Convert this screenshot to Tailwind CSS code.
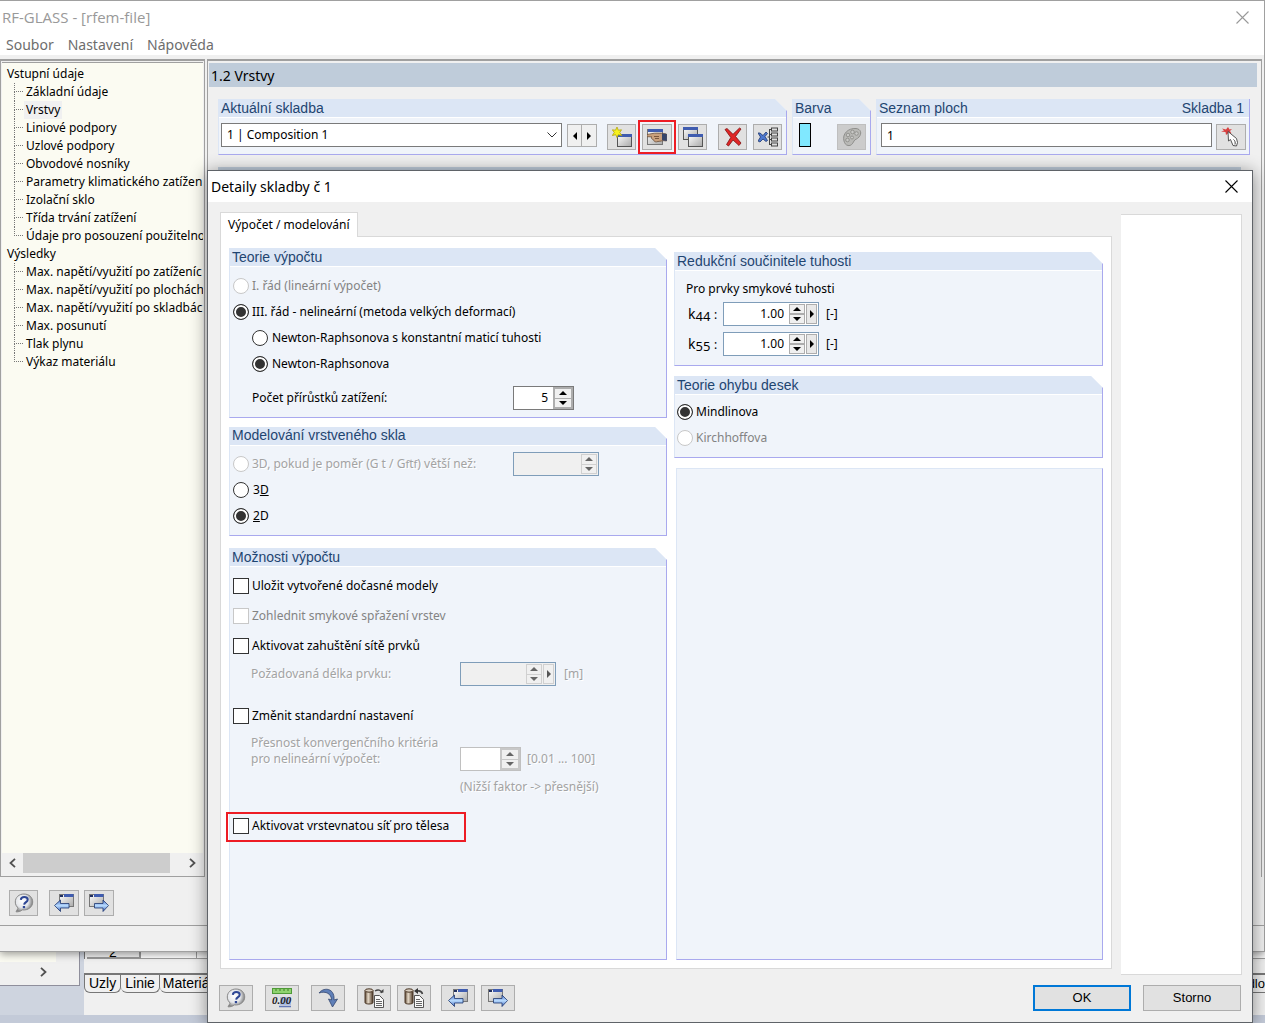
<!DOCTYPE html>
<html lang="cs">
<head>
<meta charset="utf-8">
<title>RF-GLASS - [rfem-file]</title>
<script src="https://cdn.jsdelivr.net/npm/@tailwindcss/browser@4"></script>
</head>
<body class="h-screen overflow-hidden bg-[#ced4df] font-['Noto_Sans',sans-serif] text-[12px] leading-4 text-black">

<svg class="absolute h-0 w-0" aria-hidden="true">
  <defs>
    <linearGradient id="win" x1="0" y1="0" x2="1" y2="1"><stop offset="0" stop-color="#fff"/><stop offset="1" stop-color="#a9a9a9"/></linearGradient>
    <linearGradient id="arr" x1="0" y1="0" x2="0" y2="1"><stop offset="0" stop-color="#4f75cc"/><stop offset=".5" stop-color="#b9dcff"/><stop offset="1" stop-color="#3b60b8"/></linearGradient>
    <linearGradient id="cyl" x1="0" y1="0" x2="1" y2="0"><stop offset="0" stop-color="#5a4632"/><stop offset=".4" stop-color="#e8dccb"/><stop offset="1" stop-color="#4a3726"/></linearGradient>
    <radialGradient id="bub" cx=".4" cy=".4" r=".6"><stop offset="0" stop-color="#fff"/><stop offset=".6" stop-color="#e4e6ea"/><stop offset="1" stop-color="#808080"/></radialGradient>
  </defs>
  <symbol id="i-help" viewBox="0 0 20 20"><path d="M10 1C5 1 1.300 4.300 1.300 9c0 2.600 1.200 4.700 2.900 6L2 18.800c2.500.2 4.600-.5 6.200-1.900C14 17.600 18.700 14 18.700 9c0-4.700-3.700-8-8.700-8z" fill="url(#bub)" stroke="#8a8a8a"/><path d="M6.800 6.800C7 4.900 8.500 4 10.300 4c2 0 3.400 1 3.400 2.700 0 2.300-3.200 2.500-3.600 5" fill="none" stroke="#2d4694" stroke-width="2"/><rect x="8.800" y="13" width="2.300" height="2.200" fill="#2d4694"/></symbol>
  <symbol id="i-prev" viewBox="0 0 20 20"><rect x="5.500" y="1.500" width="14" height="12" fill="url(#win)" stroke="#777"/><rect x="10" y="1" width="9.500" height="3" fill="#3f5cb0"/><rect x="6" y="2" width="3" height="2" fill="#22305f"/><path d="M.5 12.500 6.500 7v3.500H15v4.500H6.500v3.500z" fill="url(#arr)" stroke="#20376f" stroke-width=".8"/></symbol>
  <symbol id="i-next" viewBox="0 0 20 20"><rect x=".5" y="1.500" width="14" height="12" fill="url(#win)" stroke="#777"/><rect x="5" y="1" width="9.500" height="3" fill="#3f5cb0"/><rect x="1" y="2" width="3" height="2" fill="#22305f"/><path d="M19.500 12.500 14 7v3.500H5.500v4.500H14v3.500z" fill="url(#arr)" stroke="#20376f" stroke-width=".8"/></symbol>
  <symbol id="i-new" viewBox="0 0 20 20"><rect x="5.500" y="7.500" width="14" height="12" fill="url(#win)" stroke="#555"/><rect x="5" y="7" width="15" height="3" fill="#3f5cb0"/><path d="M5 0 6.300 3.200 9.500 2.800 7.800 5.500 9.800 8.500 6.300 7.700 5 10.500 3.700 7.700.3 8.500l2-3L.3 2.800l3.200.4z" fill="#f7f21d" stroke="#b3a511" stroke-width=".8"/></symbol>
  <symbol id="i-edit" viewBox="0 0 20 20"><rect x=".5" y="2.500" width="15" height="15" fill="url(#win)" stroke="#777"/><rect x="1" y="2" width="15" height="3" fill="#3f5cb0"/><path d="M0 7.500c3-.5 7-1.500 10-1.300 3 .3 5-.2 9.500.8v7c-4-1-6 .5-8.500.5-2 .8-4 .2-4-1L5 11.800c-1-.3-.7-1.600 0-1.900L0 9.700z" fill="#c9a07c" stroke="#6b4f3b" stroke-width=".8"/><path d="M15 6.500 19.800 7v7l-4.800-.8z" fill="#36466b"/><path d="M7 9.500h5M8 11.500h4" stroke="#7a573e"/></symbol>
  <symbol id="i-copy" viewBox="0 0 20 20"><rect x=".5" y=".5" width="14" height="12" fill="url(#win)" stroke="#555"/><rect x="0" y="0" width="15" height="3" fill="#3f5cb0"/><rect x="5.500" y="7.500" width="14" height="12" fill="url(#win)" stroke="#555"/><rect x="5" y="7" width="15" height="3" fill="#3f5cb0"/></symbol>
  <symbol id="i-del" viewBox="0 0 20 20"><path d="M2 2.500 4 1.500l6 5.800 6.500-6.300 1.500 1-5.500 7.500 5.500 6.500-2 2.500-6-5.500-4.500 6-2-1.500 4.300-7z" fill="#e02626" stroke="#7d1212" stroke-width=".8"/></symbol>
  <symbol id="i-delall" viewBox="0 0 20 20"><path d="M0 6h2l3 2.500L8 5l1.500 1.500-2.500 3 2.500 4-1.500 1L5 12l-3 3-2-1 2.500-4z" fill="#4d78d0" stroke="#20376f" stroke-width=".8"/><path d="M9.500 10h2M11.500 2v16" stroke="#444"/><path d="M11.500 2.500h2M11.500 7.500h2M11.500 12.500h2M11.500 17.500h2" stroke="#444"/><g fill="#ddd" stroke="#444"><rect x="13.500" y="1" width="6" height="3"/><rect x="13.500" y="6" width="6" height="3"/><rect x="13.500" y="11" width="6" height="3"/><rect x="13.500" y="16" width="6" height="3"/></g></symbol>
  <symbol id="i-pal" viewBox="0 0 20 20"><path d="M2 14C0 7 6 1 14 1.500c5 .5 6 5 3 8.500-2 2.500-4 2-5 4-1.500 3-3 5-6 4.500C3.500 18 2.500 16 2 14z" fill="#b9b9b6" stroke="#8e8e8b"/><g fill="#c9c9c7" stroke="#93938f"><circle cx="6" cy="8" r="1.800"/><circle cx="10.500" cy="5" r="1.800"/><circle cx="14.500" cy="6.500" r="1.800"/><circle cx="5.500" cy="13" r="1.800"/><circle cx="10" cy="10.500" r="1.500"/></g></symbol>
  <symbol id="i-pick" viewBox="0 0 20 20"><path d="M1 1.500l4 1L7 0l1.500 2.500L11 2 9 4l1.500 2.500-3-.5L5 8l-.5-3L0 4.500 3 3.500z" fill="#d84040"/><path d="M7 4.500 7.500 14l2-1.500 2.500 6 3.500.5 1-3.500-1-4z" fill="#fff" stroke="#444" stroke-width=".9"/><path d="M12.500 12.500c1.500 1 2 3 1.500 5" fill="none" stroke="#444"/></symbol>
  <symbol id="i-undo" viewBox="0 0 20 20"><path d="M1 5C5-.5 15-.5 16 9v3l3.500-1-5 8-4-8 3 1C13.500 6 8 2.500 1 5z" fill="#5f7fb8" stroke="#34466f" stroke-width=".8"/></symbol>
  <symbol id="i-load" viewBox="0 0 20 20"><path d="M1 2.500v12c0 2 8 2 8 0v-12" fill="url(#cyl)" stroke="#4a3726"/><ellipse cx="5" cy="2.500" rx="4" ry="1.700" fill="#d8cdbf" stroke="#4a3726"/><path d="M11 3c3-2 6-1 7 2" fill="none" stroke="#444" stroke-width="1.500"/><path d="M15.500 4.500h4V1z" fill="#444"/><path d="M10.500 7.500h5l4 4v8h-9z" fill="#fafafa" stroke="#555"/><path d="M12 11.500h4M12 13.500h6M12 15.500h6M12 17.500h6" stroke="#666"/></symbol>
  <symbol id="i-save" viewBox="0 0 20 20"><path d="M1 2.500v12c0 2 8 2 8 0v-12" fill="url(#cyl)" stroke="#4a3726"/><ellipse cx="5" cy="2.500" rx="4" ry="1.700" fill="#d8cdbf" stroke="#4a3726"/><path d="M13 3c3-.5 5 1 5.500 3" fill="none" stroke="#444" stroke-width="1.500"/><path d="M14 0v6l-4-3z" fill="#333"/><path d="M10.500 7.500h5l4 4v8h-9z" fill="#fafafa" stroke="#555"/><path d="M12 11.500h4M12 13.500h6M12 15.500h6M12 17.500h6" stroke="#666"/></symbol>
  <symbol id="i-x" viewBox="0 0 13 13"><path d="M.5.500l12 12M12.500.500l-12 12" fill="none" stroke="currentColor" stroke-width="1.100"/></symbol>
  <symbol id="i-up" viewBox="0 0 8 4"><path d="M4 0l4 4H0z" fill="currentColor"/></symbol>
  <symbol id="i-down" viewBox="0 0 8 4"><path d="M0 0h8L4 4z" fill="currentColor"/></symbol>
  <symbol id="i-left" viewBox="0 0 4 8"><path d="M4 0v8L0 4z" fill="currentColor"/></symbol>
  <symbol id="i-right" viewBox="0 0 4 8"><path d="M0 0l4 4-4 4z" fill="currentColor"/></symbol>
  <symbol id="i-chl" viewBox="0 0 7 10"><path d="M6 .8 1.500 5 6 9.200" fill="none" stroke="currentColor" stroke-width="1.800"/></symbol>
  <symbol id="i-chr" viewBox="0 0 7 10"><path d="M1 .8 5.500 5 1 9.200" fill="none" stroke="currentColor" stroke-width="1.800"/></symbol>
</svg>

<div class="relative flex h-full flex-col">

  <!-- Main window -->
  <div class="z-10 flex min-h-0 flex-1 flex-col border-t border-r border-b border-[#a0a0a0] bg-[#f0f0f0] shadow-[0_2px_8px_rgba(0,0,0,0.4)]">
    <header class="flex h-8 items-center justify-between bg-white pl-0.5 pr-[15px] font-['Open_Sans',sans-serif] text-[15px] text-[#999]">
      <h1>RF-GLASS - [rfem-file]</h1>
      <button aria-label="Zavřít" class="text-[#999]"><svg class="h-[13px] w-[13px]"><use href="#i-x"/></svg></button>
    </header>
    <nav class="flex h-[22px] items-center gap-3.5 bg-white pt-px pl-1.5 text-[14px] text-[#6d6d6d]">
      <a href="#">Soubor</a><a href="#">Nastavení</a><a href="#">Nápověda</a>
    </nav>

    <div class="flex min-h-0 flex-1 gap-0.5 pt-1">
      <!-- Navigator -->
      <aside class="flex w-[205px] shrink-0 flex-col">
        <div class="flex min-h-0 flex-1 flex-col border-t-2 border-r border-b border-l border-[#a0a0a0] p-px">
          <div class="min-h-0 flex-1 overflow-hidden whitespace-nowrap border-t border-[#a0a0a0] bg-[#fbfbf2] pt-0.5 pl-[5px] leading-[18px]">
            <div class="h-[18px]">Vstupní údaje</div>
            <ul class="pl-[7px] [&_i]:h-[9px] [&_i]:border-l [&_i]:border-dotted [&_i]:border-[#777] [&_i:first-child]:border-b [&>li]:flex [&>li]:h-[18px]">
              <li><span class="mr-[3px] flex w-[9px] shrink-0 flex-col"><i></i><i></i></span>Základní údaje</li>
              <li><span class="mr-px flex w-[9px] shrink-0 flex-col"><i></i><i></i></span><span class="bg-[#f0f0f0] px-0.5">Vrstvy</span></li>
              <li><span class="mr-[3px] flex w-[9px] shrink-0 flex-col"><i></i><i></i></span>Liniové podpory</li>
              <li><span class="mr-[3px] flex w-[9px] shrink-0 flex-col"><i></i><i></i></span>Uzlové podpory</li>
              <li><span class="mr-[3px] flex w-[9px] shrink-0 flex-col"><i></i><i></i></span>Obvodové nosníky</li>
              <li><span class="mr-[3px] flex w-[9px] shrink-0 flex-col"><i></i><i></i></span>Parametry klimatického zatížen</li>
              <li><span class="mr-[3px] flex w-[9px] shrink-0 flex-col"><i></i><i></i></span>Izolační sklo</li>
              <li><span class="mr-[3px] flex w-[9px] shrink-0 flex-col"><i></i><i></i></span>Třída trvání zatížení</li>
              <li><span class="mr-[3px] flex w-[9px] shrink-0 flex-col"><i></i></span>Údaje pro posouzení použitelno</li>
            </ul>
            <div class="h-[18px]">Výsledky</div>
            <ul class="pl-[7px] [&_i]:h-[9px] [&_i]:border-l [&_i]:border-dotted [&_i]:border-[#777] [&_i:first-child]:border-b [&>li]:flex [&>li]:h-[18px]">
              <li><span class="mr-[3px] flex w-[9px] shrink-0 flex-col"><i></i><i></i></span>Max. napětí/využití po zatíženíc</li>
              <li><span class="mr-[3px] flex w-[9px] shrink-0 flex-col"><i></i><i></i></span>Max. napětí/využití po plochách</li>
              <li><span class="mr-[3px] flex w-[9px] shrink-0 flex-col"><i></i><i></i></span>Max. napětí/využití po skladbác</li>
              <li><span class="mr-[3px] flex w-[9px] shrink-0 flex-col"><i></i><i></i></span>Max. posunutí</li>
              <li><span class="mr-[3px] flex w-[9px] shrink-0 flex-col"><i></i><i></i></span>Tlak plynu</li>
              <li><span class="mr-[3px] flex w-[9px] shrink-0 flex-col"><i></i></span>Výkaz materiálu</li>
            </ul>
          </div>
          <div class="mb-0.5 flex h-5 items-center text-[#505050]">
            <button aria-label="Doleva" class="flex w-[21px] justify-center"><svg class="h-[10px] w-[7px]"><use href="#i-chl"/></svg></button>
            <div class="h-full w-[147px] bg-[#cdcdcd]"></div>
            <button aria-label="Doprava" class="ml-auto flex w-[21px] justify-center"><svg class="h-[10px] w-[7px]"><use href="#i-chr"/></svg></button>
          </div>
        </div>
      </aside>

      <!-- Work area -->
      <main class="mr-0.5 min-w-0 flex-1 border-t-2 border-r border-l border-[#a0a0a0] pt-0.5 pr-1 pl-px">
        <h2 class="flex h-6 items-center bg-[#bfccda] pt-px pl-0.5 text-[14px]">1.2 Vrstvy</h2>
        <div class="mt-3 flex h-14 gap-[5px] pr-[7px] pl-[9px]">
          <section class="flex min-w-0 flex-1 flex-col border-r border-b border-l border-[#a9a9ee] border-l-[#dce6f5] bg-[#f0f4fa] [clip-path:polygon(0_0,calc(100%-12px)_0,100%_12px,100%_100%,0_100%)]">
            <h3 class="h-[19px] border-b border-white bg-[#dce6f5] pl-0.5 font-['Liberation_Sans',Arial,sans-serif] text-[14px] leading-[18px] text-[#1f4571]">Aktuální skladba</h3>
            <div class="flex flex-1 items-start pt-[5px] pr-1 pl-0.5">
              <div class="relative min-w-0 flex-1">
                <select aria-label="Aktuální skladba" class="h-6 w-full appearance-none border border-[#7a7a7a] bg-white pl-[5px]"><option>1 | Composition 1</option></select>
                <svg class="pointer-events-none absolute top-[9px] right-[5px] h-[6px] w-[10px]" viewBox="0 0 10 6"><path d="M.5.500 5 5 9.500.500" fill="none" stroke="#333"/></svg>
              </div>
              <div class="mt-px ml-[5px] flex">
                <button aria-label="Předchozí" class="flex h-[23px] w-[15px] items-center justify-center border border-[#adadad] bg-[#f0f0f0]"><svg class="h-2 w-1"><use href="#i-left"/></svg></button>
                <button aria-label="Další" class="flex h-[23px] w-[15px] items-center justify-center border border-l-0 border-[#adadad] bg-[#f0f0f0]"><svg class="h-2 w-1"><use href="#i-right"/></svg></button>
              </div>
              <div class="mt-px ml-[10px] flex gap-[6px]">
                <button aria-label="Nová" class="flex h-[26px] w-[29px] items-center justify-center border border-[#adadad] bg-[#e1e1e1]"><svg class="h-5 w-5"><use href="#i-new"/></svg></button>
                <button aria-label="Detaily" class="flex h-[26px] w-[30px] items-center justify-center border border-[#adadad] bg-[#e1e1e1] outline-2 outline-offset-2 outline-[#ed1c24]"><svg class="h-5 w-5"><use href="#i-edit"/></svg></button>
                <button aria-label="Kopírovat" class="flex h-[26px] w-[29px] items-center justify-center border border-[#adadad] bg-[#e1e1e1]"><svg class="h-5 w-5"><use href="#i-copy"/></svg></button>
              </div>
              <div class="mt-px ml-[11px] flex gap-[6px]">
                <button aria-label="Smazat" class="flex h-[26px] w-[29px] items-center justify-center border border-[#adadad] bg-[#e1e1e1]"><svg class="h-5 w-5"><use href="#i-del"/></svg></button>
                <button aria-label="Smazat vše" class="flex h-[26px] w-[29px] items-center justify-center border border-[#adadad] bg-[#e1e1e1]"><svg class="h-5 w-5"><use href="#i-delall"/></svg></button>
              </div>
            </div>
          </section>
          <section class="flex w-[79px] flex-col border-r border-b border-l border-[#a9a9ee] border-l-[#dce6f5] bg-[#f0f4fa] [clip-path:polygon(0_0,calc(100%-12px)_0,100%_12px,100%_100%,0_100%)]">
            <h3 class="h-[19px] border-b border-white bg-[#dce6f5] pl-0.5 font-['Liberation_Sans',Arial,sans-serif] text-[14px] leading-[18px] text-[#1f4571]">Barva</h3>
            <div class="flex justify-between pt-[5px] pr-1 pl-1.5">
              <div class="h-6 w-3 border border-black bg-[#80e8ff]"></div>
              <button aria-label="Barva" disabled class="mt-px flex h-[26px] w-[29px] items-center justify-center border border-[#bfbfbf] bg-[#ccc]"><svg class="h-5 w-5"><use href="#i-pal"/></svg></button>
            </div>
          </section>
          <section class="flex w-[374px] flex-col border-r border-b border-l border-[#a9a9ee] border-l-[#dce6f5] bg-[#f0f4fa]">
            <h3 class="flex h-[19px] justify-between border-b border-white bg-[#dce6f5] pr-[5px] pl-0.5 font-['Liberation_Sans',Arial,sans-serif] text-[14px] leading-[18px] text-[#1f4571]"><span>Seznam ploch</span><span>Skladba 1</span></h3>
            <div class="flex gap-1 pt-[5px] pr-[3px] pl-1">
              <input aria-label="Seznam ploch" value="1" class="h-6 min-w-0 flex-1 border border-[#7a7a7a] bg-white px-[5px]">
              <button aria-label="Vybrat plochy" class="mt-px flex h-[26px] w-[30px] items-center justify-center border border-[#adadad] bg-[#e1e1e1]"><svg class="h-5 w-5"><use href="#i-pick"/></svg></button>
            </div>
          </section>
        </div>
        <div class="mt-3 mr-4 ml-[9px] h-[18px] bg-[#bfccda]"></div>
      </main>
    </div>

    <div class="flex h-12 items-end pb-[9px] pl-[9px]">
      <button aria-label="Nápověda" class="flex h-[26px] w-[29px] items-center justify-center border border-[#adadad] bg-[#e1e1e1]"><svg class="h-5 w-5"><use href="#i-help"/></svg></button>
      <button aria-label="Zpět" class="ml-[11px] flex h-[26px] w-[30px] items-center justify-center border border-[#adadad] bg-[#e1e1e1]"><svg class="h-5 w-5"><use href="#i-prev"/></svg></button>
      <button aria-label="Vpřed" class="ml-[5px] flex h-[26px] w-[30px] items-center justify-center border border-[#adadad] bg-[#e1e1e1]"><svg class="h-5 w-5"><use href="#i-next"/></svg></button>
    </div>
    <div class="h-[26px] border-t border-[#a0a0a0]"></div>
  </div>

  <!-- Host application, visible below the main window -->
  <div class="flex h-[71px] overflow-hidden border-b-8 border-[#c3cad8]">
    <div class="flex h-[34px] w-20 shrink-0 flex-col border-r border-b border-[#8f8f9c] bg-[#f0f0f0]">
      <div class="h-[10px] w-14 bg-[#fbfbf2]"></div>
      <div class="flex h-5 items-center pl-10 text-[#505050]"><svg class="h-[10px] w-[7px]"><use href="#i-chr"/></svg></div>
    </div>
    <div class="ml-1 min-w-0 flex-1 overflow-hidden bg-[#f0f0f0] font-['Liberation_Sans',Arial,sans-serif] text-[14px]">
      <div class="flex h-[7px] overflow-hidden border-l border-[#777]"><div class="ml-0.5 flex w-[54px] items-end justify-center border-r-2 border-b-2 border-[#999] leading-[10px]">2</div><div class="w-14 border-r border-b border-[#a0a0a0] bg-white"></div><div class="flex-1 border-b border-[#a0a0a0] bg-white"></div></div>
      <div class="mt-[14px] flex border-t-2 border-[#777] leading-[17px]">
        <a href="#" class="rounded-b-md border-r border-b border-l border-[#777] px-1">Uzly</a>
        <a href="#" class="rounded-b-md border-r border-b border-[#777] px-1">Linie</a>
        <a href="#" class="rounded-b-md border-r border-b border-[#777] px-[3px]">Materiály</a>
        <span class="flex-1 border-b border-[#777] text-right text-[13px]"><a href="#">dlo</a></span>
      </div>
    </div>
  </div>

  <!-- Details dialog -->
  <div role="dialog" aria-labelledby="dlg-title" class="absolute top-[170px] right-3 bottom-0 left-[207px] z-20 flex flex-col border border-[#5f6368] bg-[#f0f0f0] shadow-[0_2px_16px_rgba(0,0,0,0.45)]">
    <header class="flex h-[31px] items-center justify-between bg-white pr-3.5 pl-[3px] text-[14px]">
      <h2 id="dlg-title">Detaily skladby č 1</h2>
      <button aria-label="Zavřít"><svg class="h-[13px] w-[13px]"><use href="#i-x"/></svg></button>
    </header>

    <div class="flex min-h-0 flex-1 gap-[9px] pr-2.5 pl-3">
      <div class="mt-[10px] mb-[6px] flex min-w-0 flex-1 flex-col">
        <div class="z-10 -mb-px flex"><button role="tab" class="h-[25px] border border-b-0 border-[#d9d9d9] bg-white px-[7px]">Výpočet / modelování</button></div>
        <div class="flex min-h-0 flex-1 gap-[7px] border border-[#d9d9d9] bg-white px-2 pt-[11px] pb-2">

          <div class="flex min-w-0 flex-[438_1_0%] flex-col">
            <fieldset class="h-[170px] border-r border-b border-l border-[#a9a9ee] border-l-[#dce6f5] bg-[#f0f4fa] [clip-path:polygon(0_0,calc(100%-12px)_0,100%_12px,100%_100%,0_100%)]">
              <h3 class="h-[19px] border-b border-white bg-[#dce6f5] pl-0.5 font-['Liberation_Sans',Arial,sans-serif] text-[14px] leading-[18px] text-[#1f4571]">Teorie výpočtu</h3>
              <div class="pt-1.5 pl-[3px]">
                <label class="flex h-[26px] items-center gap-[3px] text-[#838383]"><input type="radio" disabled name="theory" class="h-4 w-4 appearance-none rounded-full border border-[#c8c8c8] bg-white">I. řád (lineární výpočet)</label>
                <label class="flex h-[26px] items-center gap-[3px]"><input type="radio" checked name="theory" class="h-4 w-4 appearance-none rounded-full border border-[#333] bg-white checked:bg-[#333] checked:shadow-[inset_0_0_0_2px_#fff]">III. řád - nelineární (metoda velkých deformací)</label>
                <label class="flex h-[26px] items-center gap-1 pl-[19px]"><input type="radio" name="method" class="h-4 w-4 appearance-none rounded-full border border-[#333] bg-white">Newton-Raphsonova s konstantní maticí tuhosti</label>
                <label class="flex h-[26px] items-center gap-1 pl-[19px]"><input type="radio" checked name="method" class="h-4 w-4 appearance-none rounded-full border border-[#333] bg-white checked:bg-[#333] checked:shadow-[inset_0_0_0_2px_#fff]">Newton-Raphsonova</label>
                <div class="mt-[9px] flex h-6 items-center pl-[19px]">
                  <label for="incr" class="w-[261px]">Počet přírůstků zatížení:</label>
                  <div class="flex h-6 w-[61px] border border-[#7a7a7a] bg-white"><input id="incr" value="5" class="min-w-0 flex-1 pr-[5px] text-right"><div class="flex w-5 flex-col gap-px border-2 border-[#adadad] bg-[#adadad]"><button aria-label="Více" class="flex flex-1 items-center justify-center bg-[#f0f0f0]"><svg class="h-1 w-2"><use href="#i-up"/></svg></button><button aria-label="Méně" class="flex flex-1 items-center justify-center bg-[#f0f0f0]"><svg class="h-1 w-2"><use href="#i-down"/></svg></button></div></div>
                </div>
              </div>
            </fieldset>

            <fieldset class="mt-[9px] h-[109px] border-r border-b border-l border-[#a9a9ee] border-l-[#dce6f5] bg-[#f0f4fa] [clip-path:polygon(0_0,calc(100%-12px)_0,100%_12px,100%_100%,0_100%)]">
              <h3 class="h-[19px] border-b border-white bg-[#dce6f5] pl-0.5 font-['Liberation_Sans',Arial,sans-serif] text-[14px] leading-[17px] text-[#1f4571]">Modelování vrstveného skla</h3>
              <div class="pt-[5px] pl-[3px]">
                <div class="flex h-[26px] items-center">
                  <label class="flex w-[280px] items-center gap-[3px] whitespace-nowrap text-[#a3a3a3] [text-shadow:1px_1px_0_#fff]"><input type="radio" disabled name="model" class="h-4 w-4 appearance-none rounded-full border border-[#c8c8c8] bg-white"><span>3D, pokud je poměr (G t / G<span class="text-[11px]">f</span>t<span class="text-[11px]">f</span>) větší než:</span></label>
                  <div class="flex h-6 w-[86px] border border-[#7f9db9] bg-[#f0f0f0] p-px"><input aria-label="Poměr" disabled class="min-w-0 flex-1"><div class="flex w-4 flex-col bg-[#d0d0d0] p-px gap-px text-[#666]"><button disabled aria-label="Více" class="flex flex-1 items-center justify-center bg-[#f0f0f0]"><svg class="h-1 w-2"><use href="#i-up"/></svg></button><button disabled aria-label="Méně" class="flex flex-1 items-center justify-center bg-[#f0f0f0]"><svg class="h-1 w-2"><use href="#i-down"/></svg></button></div></div>
                </div>
                <label class="flex h-[26px] items-center gap-1"><input type="radio" name="model" class="h-4 w-4 appearance-none rounded-full border border-[#333] bg-white"><span>3<u>D</u></span></label>
                <label class="flex h-[26px] items-center gap-1"><input type="radio" checked name="model" class="h-4 w-4 appearance-none rounded-full border border-[#333] bg-white checked:bg-[#333] checked:shadow-[inset_0_0_0_2px_#fff]"><span><u>2</u>D</span></label>
              </div>
            </fieldset>

            <div class="relative mt-3 flex min-h-0 flex-1 flex-col">
              <fieldset class="flex-1 border-r border-b border-l border-[#a9a9ee] border-l-[#dce6f5] bg-[#f0f4fa] [clip-path:polygon(0_0,calc(100%-12px)_0,100%_12px,100%_100%,0_100%)]">
                <h3 class="h-[19px] border-b border-white bg-[#dce6f5] pl-0.5 font-['Liberation_Sans',Arial,sans-serif] text-[14px] leading-[18px] text-[#1f4571]">Možnosti výpočtu</h3>
                <div class="pt-1 pl-[3px]">
                  <label class="flex h-[30px] items-center gap-[3px]"><input type="checkbox" class="h-4 w-4 appearance-none border border-[#333] bg-white">Uložit vytvořené dočasné modely</label>
                  <label class="flex h-[30px] items-center gap-[3px] text-[#838383]"><input type="checkbox" disabled class="h-4 w-4 appearance-none border border-[#c8c8c8] bg-white">Zohlednit smykové spřažení vrstev</label>
                  <label class="flex h-[30px] items-center gap-[3px]"><input type="checkbox" class="h-4 w-4 appearance-none border border-[#333] bg-white">Aktivovat zahuštění sítě prvků</label>
                  <div class="flex h-[26px] items-center pl-[18px] text-[#a3a3a3] [text-shadow:1px_1px_0_#fff]">
                    <label for="len" class="w-[209px]">Požadovaná délka prvku:</label>
                    <div class="flex h-6 w-24 border border-[#7f9db9] bg-[#f0f0f0] p-px"><input id="len" disabled class="min-w-0 flex-1"><div class="flex w-4 flex-col bg-[#d0d0d0] p-px gap-px text-[#666]"><button disabled aria-label="Více" class="flex flex-1 items-center justify-center bg-[#f0f0f0]"><svg class="h-1 w-2"><use href="#i-up"/></svg></button><button disabled aria-label="Méně" class="flex flex-1 items-center justify-center bg-[#f0f0f0]"><svg class="h-1 w-2"><use href="#i-down"/></svg></button></div><button disabled aria-label="Nabídka" class="ml-px flex w-[11px] items-center justify-center border border-[#d0d0d0] text-[#555]"><svg class="h-2 w-1"><use href="#i-right"/></svg></button></div>
                    <span class="ml-2">[m]</span>
                  </div>
                  <label class="mt-3.5 flex h-[30px] items-center gap-[3px]"><input type="checkbox" class="h-4 w-4 appearance-none border border-[#333] bg-white">Změnit standardní nastavení</label>
                  <div class="mt-1 flex h-9 items-start pl-[18px] text-[#a3a3a3] [text-shadow:1px_1px_0_#fff]">
                    <label for="prec" class="w-[209px]">Přesnost konvergenčního kritéria<br>pro nelineární výpočet:</label>
                    <div class="flex h-6 w-[61px] self-end border border-[#c0c0c0] bg-white"><input id="prec" disabled class="min-w-0 flex-1"><div class="flex w-5 flex-col gap-px border-2 border-[#c8c8c8] bg-[#c8c8c8] text-[#666]"><button disabled aria-label="Více" class="flex flex-1 items-center justify-center bg-[#f0f0f0]"><svg class="h-1 w-2"><use href="#i-up"/></svg></button><button disabled aria-label="Méně" class="flex flex-1 items-center justify-center bg-[#f0f0f0]"><svg class="h-1 w-2"><use href="#i-down"/></svg></button></div></div>
                    <span class="mt-4 ml-1.5">[0.01 ... 100]</span>
                  </div>
                  <p class="mt-2 pl-[227px] text-[#a3a3a3] [text-shadow:1px_1px_0_#fff]">(Nižší faktor -&gt; přesnější)</p>
                  <label class="mt-4 flex h-[30px] items-center gap-[3px]"><input type="checkbox" class="h-4 w-4 appearance-none border border-[#333] bg-white">Aktivovat vrstevnatou síť pro tělesa</label>
                </div>
              </fieldset>
              <div class="pointer-events-none absolute top-[264px] -left-[3px] h-[30px] w-60 border-2 border-[#ed1c24]"></div>
            </div>
          </div>

          <div class="mt-1 flex min-w-0 flex-[429_1_0%] flex-col">
            <fieldset class="h-[114px] border-r border-b border-l border-[#a9a9ee] border-l-[#dce6f5] bg-[#f0f4fa] [clip-path:polygon(0_0,calc(100%-12px)_0,100%_12px,100%_100%,0_100%)]">
              <h3 class="h-[19px] border-b border-white bg-[#dce6f5] pl-0.5 font-['Liberation_Sans',Arial,sans-serif] text-[14px] leading-[18px] text-[#1f4571]">Redukční součinitele tuhosti</h3>
              <div class="pt-[10px] pl-[11px]">
                <p>Pro prvky smykové tuhosti</p>
                <div class="mt-[5px] flex h-6 items-center">
                  <label for="k44" class="w-[37px] pl-0.5 text-[14px]">k<span class="relative top-0.5 text-[13px]">44</span> <span class="text-[12px]">:</span></label>
                  <div class="flex h-6 w-24 border border-[#7f9db9] bg-white p-px"><input id="k44" value="1.00" class="min-w-0 flex-1 pr-[5px] text-right"><div class="flex w-4 flex-col bg-[#adadad] p-px gap-0.5"><button aria-label="Více" class="flex flex-1 items-center justify-center bg-[#f0f0f0]"><svg class="h-1 w-2"><use href="#i-up"/></svg></button><button aria-label="Méně" class="flex flex-1 items-center justify-center bg-[#f0f0f0]"><svg class="h-1 w-2"><use href="#i-down"/></svg></button></div><button aria-label="Nabídka" class="ml-px flex w-[11px] items-center justify-center border border-[#adadad] bg-[#e8e8e8]"><svg class="h-2 w-1"><use href="#i-right"/></svg></button></div>
                  <span class="ml-[7px]">[-]</span>
                </div>
                <div class="mt-1.5 flex h-6 items-center">
                  <label for="k55" class="w-[37px] pl-0.5 text-[14px]">k<span class="relative top-0.5 text-[13px]">55</span> <span class="text-[12px]">:</span></label>
                  <div class="flex h-6 w-24 border border-[#7f9db9] bg-white p-px"><input id="k55" value="1.00" class="min-w-0 flex-1 pr-[5px] text-right"><div class="flex w-4 flex-col bg-[#adadad] p-px gap-0.5"><button aria-label="Více" class="flex flex-1 items-center justify-center bg-[#f0f0f0]"><svg class="h-1 w-2"><use href="#i-up"/></svg></button><button aria-label="Méně" class="flex flex-1 items-center justify-center bg-[#f0f0f0]"><svg class="h-1 w-2"><use href="#i-down"/></svg></button></div><button aria-label="Nabídka" class="ml-px flex w-[11px] items-center justify-center border border-[#adadad] bg-[#e8e8e8]"><svg class="h-2 w-1"><use href="#i-right"/></svg></button></div>
                  <span class="ml-[7px]">[-]</span>
                </div>
              </div>
            </fieldset>
            <fieldset class="mt-2.5 h-[82px] border-r border-b border-l border-[#a9a9ee] border-l-[#dce6f5] bg-[#f0f4fa] [clip-path:polygon(0_0,calc(100%-12px)_0,100%_12px,100%_100%,0_100%)]">
              <h3 class="h-[19px] border-b border-white bg-[#dce6f5] pl-0.5 font-['Liberation_Sans',Arial,sans-serif] text-[14px] leading-[18px] text-[#1f4571]">Teorie ohybu desek</h3>
              <div class="pt-1 pl-0.5">
                <label class="flex h-[26px] items-center gap-[3px]"><input type="radio" checked name="bend" class="h-4 w-4 appearance-none rounded-full border border-[#333] bg-white checked:bg-[#333] checked:shadow-[inset_0_0_0_2px_#fff]">Mindlinova</label>
                <label class="flex h-[26px] items-center gap-[3px] text-[#838383]"><input type="radio" disabled name="bend" class="h-4 w-4 appearance-none rounded-full border border-[#c8c8c8] bg-white">Kirchhoffova</label>
              </div>
            </fieldset>
            <div class="mt-2.5 ml-0.5 flex-1 border border-[#a9a9ee] border-t-[#dce6f5] border-l-[#dce6f5] bg-[#f0f4fa]"></div>
          </div>
        </div>
      </div>
      <div class="mt-3 w-[121px] shrink-0 border-t border-r border-b border-[#d9d9d9] bg-white"></div>
    </div>

    <footer class="flex h-[47px] items-start pt-[10px] pr-[11px] pl-[11px]">
      <button aria-label="Nápověda" class="flex h-[26px] w-[34px] items-center justify-center border border-[#adadad] bg-[#e1e1e1]"><svg class="h-5 w-5"><use href="#i-help"/></svg></button>
      <button aria-label="Jednotky" class="ml-3 flex h-[26px] w-[34px] items-center justify-center border border-[#adadad] bg-[#e1e1e1]"><svg class="h-5 w-5" viewBox="0 0 20 20"><rect x=".5" y=".5" width="19" height="5" fill="#8fd36f" stroke="#4f9a37"/><path d="M4 1v2M8 1v2M12 1v2M16 1v2" stroke="#3d7d29"/><rect x="8" y="9" width="11" height="8" fill="#a9bbe4"/><path d="M7 18.500h12" stroke="#6076b8" stroke-width="1.500"/><text x="0" y="16" font-family="Liberation Serif,serif" font-style="italic" font-weight="bold" font-size="11" fill="#222">0.00</text></svg></button>
      <button aria-label="Obnovit" class="ml-3 flex h-[26px] w-[34px] items-center justify-center border border-[#adadad] bg-[#e1e1e1]"><svg class="h-5 w-5"><use href="#i-undo"/></svg></button>
      <button aria-label="Načíst" class="ml-3 flex h-[26px] w-[34px] items-center justify-center border border-[#adadad] bg-[#e1e1e1]"><svg class="h-5 w-5"><use href="#i-load"/></svg></button>
      <button aria-label="Uložit" class="ml-1.5 flex h-[26px] w-[34px] items-center justify-center border border-[#adadad] bg-[#e1e1e1]"><svg class="h-5 w-5"><use href="#i-save"/></svg></button>
      <button aria-label="Zpět" class="ml-[10px] flex h-[26px] w-[34px] items-center justify-center border border-[#adadad] bg-[#e1e1e1]"><svg class="h-5 w-5"><use href="#i-prev"/></svg></button>
      <button aria-label="Vpřed" class="ml-1.5 flex h-[26px] w-[34px] items-center justify-center border border-[#adadad] bg-[#e1e1e1]"><svg class="h-5 w-5"><use href="#i-next"/></svg></button>
      <div class="ml-auto flex gap-3 font-['Liberation_Sans',Arial,sans-serif] text-[13px]">
        <button class="h-[26px] w-[98px] border-2 border-[#0078d7] bg-[#e1e1e1]">OK</button>
        <button class="h-[26px] w-[98px] border border-[#adadad] bg-[#e1e1e1]">Storno</button>
      </div>
    </footer>
  </div>
</div>
</body>
</html>
